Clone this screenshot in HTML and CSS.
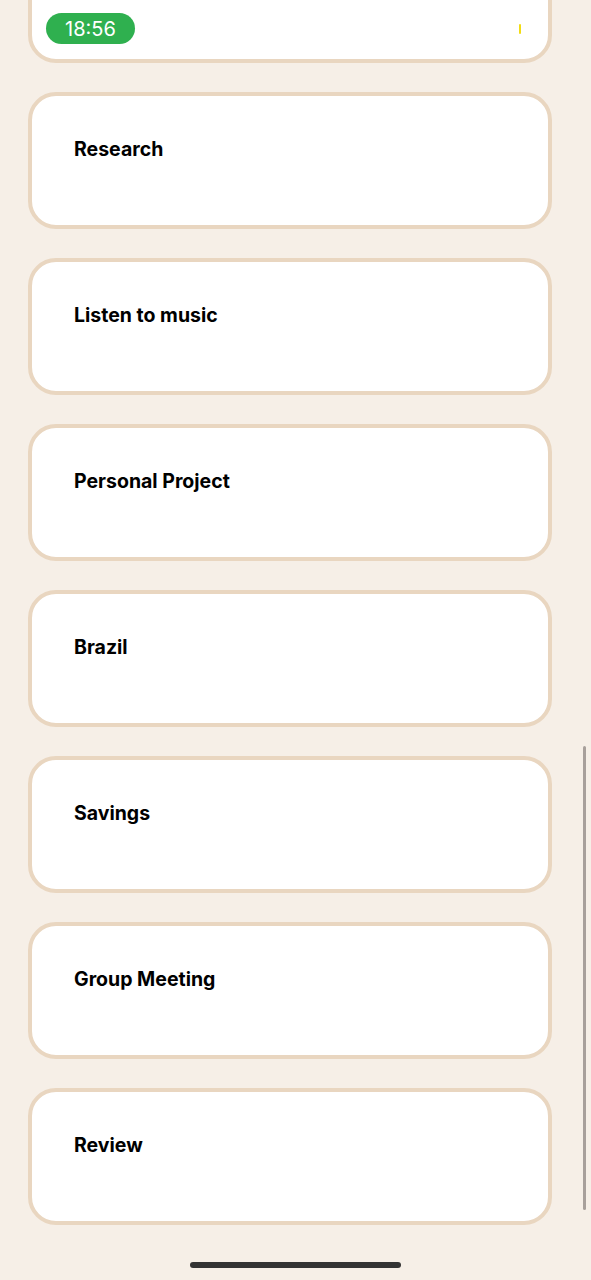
FILE: index.html
```html
<!DOCTYPE html>
<html>
<head>
<meta charset="utf-8">
<link rel="stylesheet" href="styles.css">
</head>
<body>
<main class="list">
  <section class="card card-top">
    <div class="top-row">
      <span class="time-pill">18:56</span>
      <span class="tick"></span>
    </div>
  </section>
  <section class="card"><h2 class="title">Research</h2></section>
  <section class="card"><h2 class="title">Listen to music</h2></section>
  <section class="card"><h2 class="title">Personal Project</h2></section>
  <section class="card"><h2 class="title">Brazil</h2></section>
  <section class="card"><h2 class="title">Savings</h2></section>
  <section class="card"><h2 class="title">Group Meeting</h2></section>
  <section class="card"><h2 class="title">Review</h2></section>
</main>
<div class="scrollbar"></div>
<div class="home-indicator"></div>
</body>
</html>
```
FILE: styles.css
```css
html, body {
  margin: 0;
  padding: 0;
  background: #f6efe7;
  height: 1280px;
  overflow: hidden;
  font-family: Inter, "Noto Sans", sans-serif;
}
.list {
  display: flex;
  flex-direction: column;
  gap: 29px;
  padding-left: 28px;
  margin-top: -74px;
}
.card {
  box-sizing: border-box;
  width: 524px;
  height: 137px;
  background: #ffffff;
  border: 4px solid #e9d6c0;
  border-radius: 28px;
  padding: 41px 0 0 42px;
}
.title {
  margin: 0;
  font-size: 19.5px;
  line-height: 24px;
  font-weight: 700;
  color: #000;
  letter-spacing: 0;
}
.card-top {
  padding: 0 0 15px 14px;
  display: flex;
  flex-direction: column;
  justify-content: flex-end;
}
.top-row {
  display: flex;
  align-items: center;
  justify-content: space-between;
  padding-right: 27px;
}
.time-pill {
  display: inline-flex;
  align-items: center;
  justify-content: center;
  width: 89px;
  height: 31px;
  border-radius: 16px;
  background: #2fb04f;
  color: #ffffff;
  font-size: 20px;
  font-weight: 400;
}
.tick {
  width: 2px;
  height: 10px;
  background: #f2dc14;
  border-radius: 1px;
}
.scrollbar {
  position: fixed;
  left: 583px;
  top: 746px;
  width: 3px;
  height: 464px;
  border-radius: 2px;
  background: #a8a09b;
}
.home-indicator {
  position: fixed;
  left: 190px;
  top: 1262px;
  width: 211px;
  height: 6px;
  border-radius: 3px;
  background: #333333;
}
```
